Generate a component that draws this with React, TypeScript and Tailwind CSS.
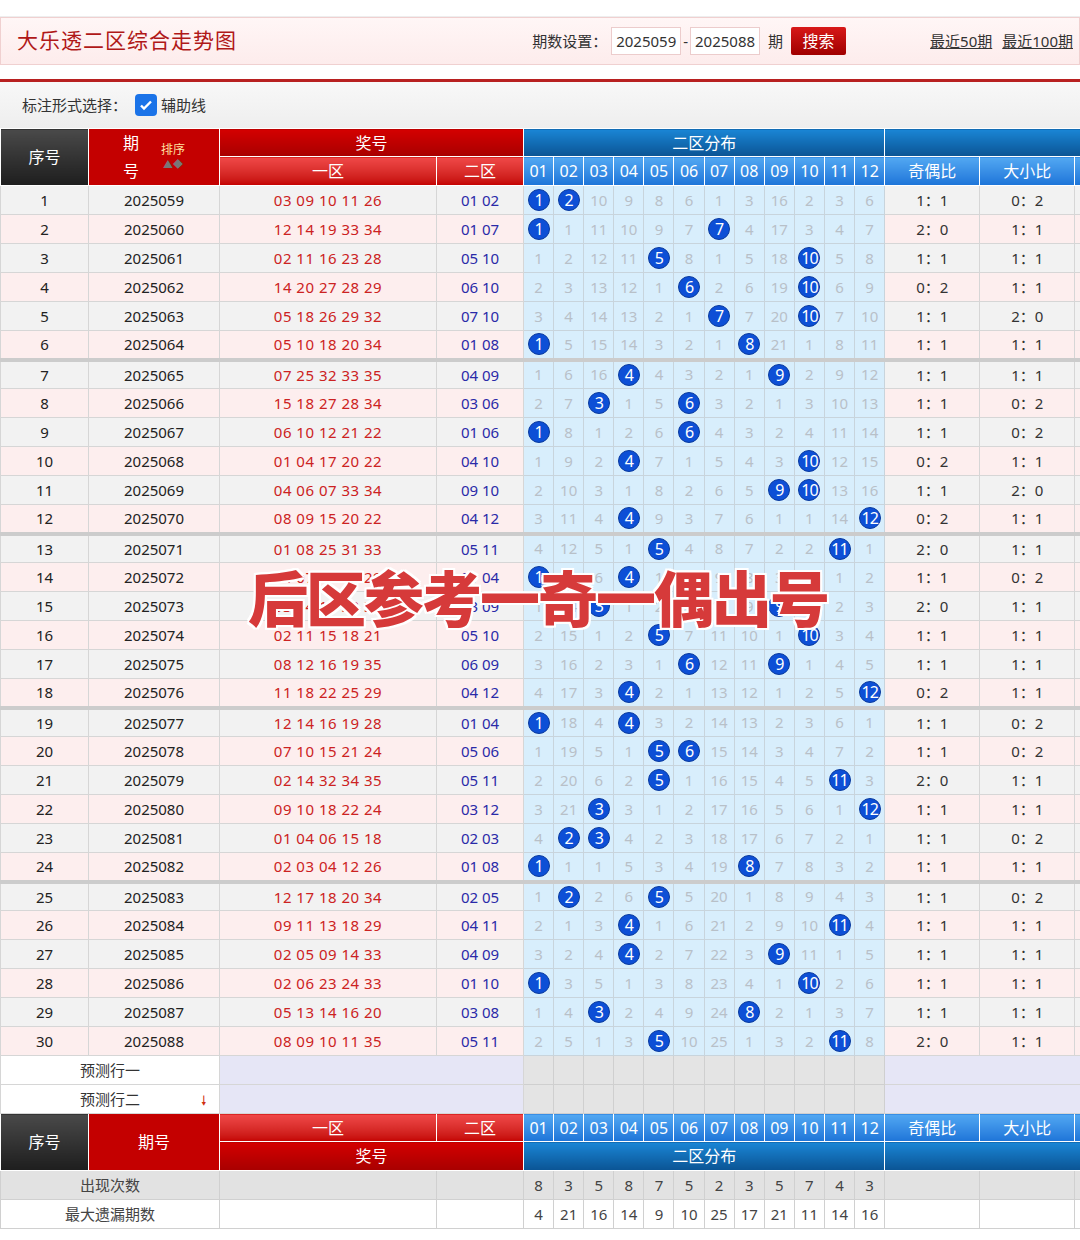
import React from "react";

const fronts = ["03 09 10 11 26","12 14 19 33 34","02 11 16 23 28","14 20 27 28 29","05 18 26 29 32","05 10 18 20 34","07 25 32 33 35","15 18 27 28 34","06 10 12 21 22","01 04 17 20 22","04 06 07 33 34","08 09 15 20 22","01 08 25 31 33","04 07 15 24 29","03 04 17 33 34","02 11 15 18 21","08 12 16 19 35","11 18 22 25 29","12 14 16 19 28","07 10 15 21 24","02 14 32 34 35","09 10 18 22 24","01 04 06 15 18","02 03 04 12 26","12 17 18 20 34","09 11 13 18 29","02 05 09 14 33","02 06 23 24 33","05 13 14 16 20","08 09 10 11 35"];
const backs = ["01 02","01 07","05 10","06 10","07 10","01 08","04 09","03 06","01 06","04 10","09 10","04 12","05 11","01 04","03 09","05 10","06 09","04 12","01 04","05 06","05 11","03 12","02 03","01 08","02 05","04 11","04 09","01 10","03 08","05 11"];
const occ = [8,3,5,8,7,5,2,3,5,7,4,3];
const maxMiss = [4,21,16,14,9,10,25,17,21,11,14,16];

const rows = (() => {
  let prev = [0,0,9,8,7,5,0,2,15,1,2,5];
  return backs.map((b, i) => {
    const nums = b.split(" ").map(Number);
    const cur = prev.map((p, k) => (nums.includes(k + 1) ? 0 : p + 1));
    prev = cur;
    const odd = nums.filter((n) => n % 2 === 1).length;
    const big = nums.filter((n) => n >= 7).length;
    return { idx: i + 1, issue: String(2025059 + i), front: fronts[i], back: b, nums, cur, oe: `${odd}：${2 - odd}`, bs: `${big}：${2 - big}` };
  });
})();

const font = { fontFamily: '"Noto Sans","Noto Sans CJK SC",sans-serif' };
const cols = Array.from({ length: 12 }, (_, i) => String(i + 1).padStart(2, "0"));

function Ball({ n }: { n: number }) {
  return (
    <span className="inline-flex items-center justify-center w-[22px] h-[22px] rounded-full bg-[#0d4fd6] text-white text-[16px] leading-none border border-[#093a9e] tracking-[-1px]">
      {n}
    </span>
  );
}

export default function App() {
  return (
    <div className="w-[1080px] h-[1240px] overflow-hidden bg-white relative" style={font}>
      <div className="h-[17px] border-b border-[#eee]" />
      <div className="h-[48px] mx-0 border border-[#f0d0d0] bg-gradient-to-b from-[#fff6f6] to-[#fdecec] flex items-center">
        <div className="pl-[16px] text-[21px] text-[#b01818] tracking-[1px]">大乐透二区综合走势图</div>
        <div className="ml-auto flex items-center text-[15px] text-[#333]">
          <span className="mr-[4px]">期数设置：</span>
          <span className="bg-white border border-[#eccccc] h-[28px] w-[70px] flex items-center justify-center">2025059</span>
          <span className="mx-[2px]">-</span>
          <span className="bg-white border border-[#eccccc] h-[28px] w-[70px] flex items-center justify-center">2025088</span>
          <span className="mx-[8px]">期</span>
          <span className="bg-gradient-to-b from-[#d81818] to-[#a00000] text-white rounded-[2px] h-[28px] w-[55px] flex items-center justify-center text-[16px]">搜索</span>
          <span className="ml-[84px] underline">最近50期</span>
          <span className="ml-[10px] mr-[6px] underline">最近100期</span>
        </div>
      </div>
      <div className="h-[14px]" />
      <div className="h-[3px] bg-[#b82020]" />
      <div className="h-[46px] bg-gradient-to-b from-[#f8f8f8] to-[#eeeeee] flex items-center pl-[22px] text-[15px] text-[#333]">
        <span>标注形式选择：</span>
        <span className="ml-[8px] w-[22px] h-[22px] rounded-[4px] bg-[#1a73e8] flex items-center justify-center">
          <svg width="16" height="16" viewBox="0 0 16 16"><path d="M3 8.5l3 3 7-7" stroke="white" strokeWidth="2.4" fill="none" /></svg>
        </span>
        <span className="ml-[4px]">辅助线</span>
      </div>

      <table className="border-collapse table-fixed w-[1100px] text-[15px]">
        <colgroup>
          <col className="w-[88px]" /><col className="w-[131px]" /><col className="w-[217px]" /><col className="w-[87px]" />
          {cols.map((c) => <col key={c} className="w-[30.1px]" />)}
          <col className="w-[95px]" /><col className="w-[95px]" /><col className="w-[26px]" />
        </colgroup>
        <thead>
          <tr className="h-[28px] text-white">
            <th rowSpan={2} className="bg-gradient-to-b from-[#4a4a4a] to-[#1e1e1e] font-normal text-[16px] border border-white">序号</th>
            <th rowSpan={2} className="bg-[#c40000] font-normal text-[16px] border border-white">
              <div className="flex items-center justify-center gap-[22px]">
                <div className="flex flex-col leading-[28px]"><span>期</span><span>号</span></div>
                <div className="flex flex-col items-center text-[12px] text-[#ffe0a0] leading-[14px]"><span>排序</span><span className="text-[10px] text-[#777]">▲◆</span></div>
              </div>
            </th>
            <th colSpan={2} className="bg-gradient-to-b from-[#d40000] to-[#a80000] font-normal text-[16px] border border-white">奖号</th>
            <th colSpan={12} className="bg-gradient-to-b from-[#1a86d6] to-[#0b5494] font-normal text-[16px] border border-white">二区分布</th>
            <th colSpan={3} className="bg-gradient-to-b from-[#1a86d6] to-[#0b5494] border border-white" />
          </tr>
          <tr className="h-[29px] text-white">
            <th className="bg-gradient-to-b from-[#f04848] to-[#c40000] font-normal text-[16px] border border-white">一区</th>
            <th className="bg-gradient-to-b from-[#f04848] to-[#c40000] font-normal text-[16px] border border-white">二区</th>
            {cols.map((c) => <th key={c} className="bg-gradient-to-b from-[#52a8f2] to-[#1d74d8] font-normal text-[16px] border border-white px-0">{c}</th>)}
            <th className="bg-gradient-to-b from-[#52a8f2] to-[#1d74d8] font-normal text-[16px] border border-white">奇偶比</th>
            <th className="bg-gradient-to-b from-[#52a8f2] to-[#1d74d8] font-normal text-[16px] border border-white">大小比</th>
            <th className="bg-gradient-to-b from-[#52a8f2] to-[#1d74d8] border border-white" />
          </tr>
        </thead>
        <tbody>
          {rows.map((r) => {
            const even = r.idx % 2 === 0;
            const bg = even ? "bg-[#fdeeee]" : "bg-[#f2f2f2]";
            const sep = r.idx % 6 === 0 && r.idx !== 30 ? "border-b-[4px] border-b-[#cccccc]" : "";
            return (
              <tr key={r.idx} className={`h-[29px] ${sep}`}>
                <td className={`${bg} text-center text-[#222] border border-[#d6d6d6]`}>{r.idx}</td>
                <td className={`${bg} text-center text-[#222] border border-[#d6d6d6]`}>{r.issue}</td>
                <td className={`${bg} text-center text-[#cc2222] border border-[#d6d6d6] tracking-[0.5px]`}>{r.front}</td>
                <td className={`${bg} text-center text-[#2a2aa8] border border-[#d6d6d6]`}>{r.back}</td>
                {r.cur.map((v, k) => (
                  <td key={k} className="bg-[#d8eefc] text-center text-[#b8c0c8] border border-[#c8d4dc] p-0 leading-none">
                    {v === 0 ? <Ball n={k + 1} /> : v}
                  </td>
                ))}
                <td className={`${bg} text-center text-[#333] border border-[#d6d6d6]`}>{r.oe}</td>
                <td className={`${bg} text-center text-[#333] border border-[#d6d6d6]`}>{r.bs}</td>
                <td className={`${bg} border border-[#d6d6d6]`} />
              </tr>
            );
          })}
          {["预测行一", "预测行二"].map((t, i) => (
            <tr key={t} className="h-[29px]">
              <td colSpan={2} className="bg-white text-center text-[#333] border border-[#d6d6d6] relative">
                {t}
                {i === 1 && <span className="absolute right-[12px] top-[6px] text-[#d03010] text-[13px]">🠗</span>}
              </td>
              <td colSpan={2} className="bg-[#e6e6f6] border border-[#d6d6d6]" />
              {cols.map((c) => <td key={c} className="bg-[#e4e4e4] border border-[#cfcfcf]" />)}
              <td colSpan={3} className="bg-[#e6e6f6] border border-[#d6d6d6]" />
            </tr>
          ))}
          <tr className="h-[28px] text-white">
            <td rowSpan={2} className="bg-gradient-to-b from-[#4a4a4a] to-[#1e1e1e] text-center text-[16px] border border-white">序号</td>
            <td rowSpan={2} className="bg-[#c40000] text-center text-[16px] border border-white">期号</td>
            <td className="bg-gradient-to-b from-[#f04848] to-[#c40000] text-center text-[16px] border border-white">一区</td>
            <td className="bg-gradient-to-b from-[#f04848] to-[#c40000] text-center text-[16px] border border-white">二区</td>
            {cols.map((c) => <td key={c} className="bg-gradient-to-b from-[#52a8f2] to-[#1d74d8] text-center text-[16px] border border-white">{c}</td>)}
            <td className="bg-gradient-to-b from-[#52a8f2] to-[#1d74d8] text-center text-[16px] border border-white">奇偶比</td>
            <td className="bg-gradient-to-b from-[#52a8f2] to-[#1d74d8] text-center text-[16px] border border-white">大小比</td>
            <td className="bg-gradient-to-b from-[#52a8f2] to-[#1d74d8] border border-white" />
          </tr>
          <tr className="h-[29px] text-white">
            <td colSpan={2} className="bg-gradient-to-b from-[#d40000] to-[#a80000] text-center text-[16px] border border-white">奖号</td>
            <td colSpan={12} className="bg-gradient-to-b from-[#1a86d6] to-[#0b5494] text-center text-[16px] border border-white">二区分布</td>
            <td colSpan={3} className="bg-gradient-to-b from-[#1a86d6] to-[#0b5494] border border-white" />
          </tr>
          <tr className="h-[29px] bg-[#e2e2e2] text-[#444]">
            <td colSpan={2} className="text-center border border-[#d0d0d0]">出现次数</td>
            <td className="border border-[#d0d0d0]" /><td className="border border-[#d0d0d0]" />
            {occ.map((v, k) => <td key={k} className="text-center border border-[#d0d0d0]">{v}</td>)}
            <td className="border border-[#d0d0d0]" /><td className="border border-[#d0d0d0]" /><td className="border border-[#d0d0d0]" />
          </tr>
          <tr className="h-[29px] bg-white text-[#444]">
            <td colSpan={2} className="text-center border border-[#d0d0d0]">最大遗漏期数</td>
            <td className="border border-[#d0d0d0]" /><td className="border border-[#d0d0d0]" />
            {maxMiss.map((v, k) => <td key={k} className="text-center border border-[#d0d0d0]">{v}</td>)}
            <td className="border border-[#d0d0d0]" /><td className="border border-[#d0d0d0]" /><td className="border border-[#d0d0d0]" />
          </tr>
        </tbody>
      </table>

      <div
        className="absolute left-[248px] top-[566px] text-[60px] font-black text-[#d63a3a] tracking-[-2px] leading-none whitespace-nowrap"
        style={{ fontFamily: '"Noto Sans CJK SC",sans-serif', textShadow: "2px 0 #fff,-2px 0 #fff,0 2px #fff,0 -2px #fff,2px 2px #fff,-2px -2px #fff,2px -2px #fff,-2px 2px #fff" }}
      >
        后区参考一奇一偶出号
      </div>
    </div>
  );
}
